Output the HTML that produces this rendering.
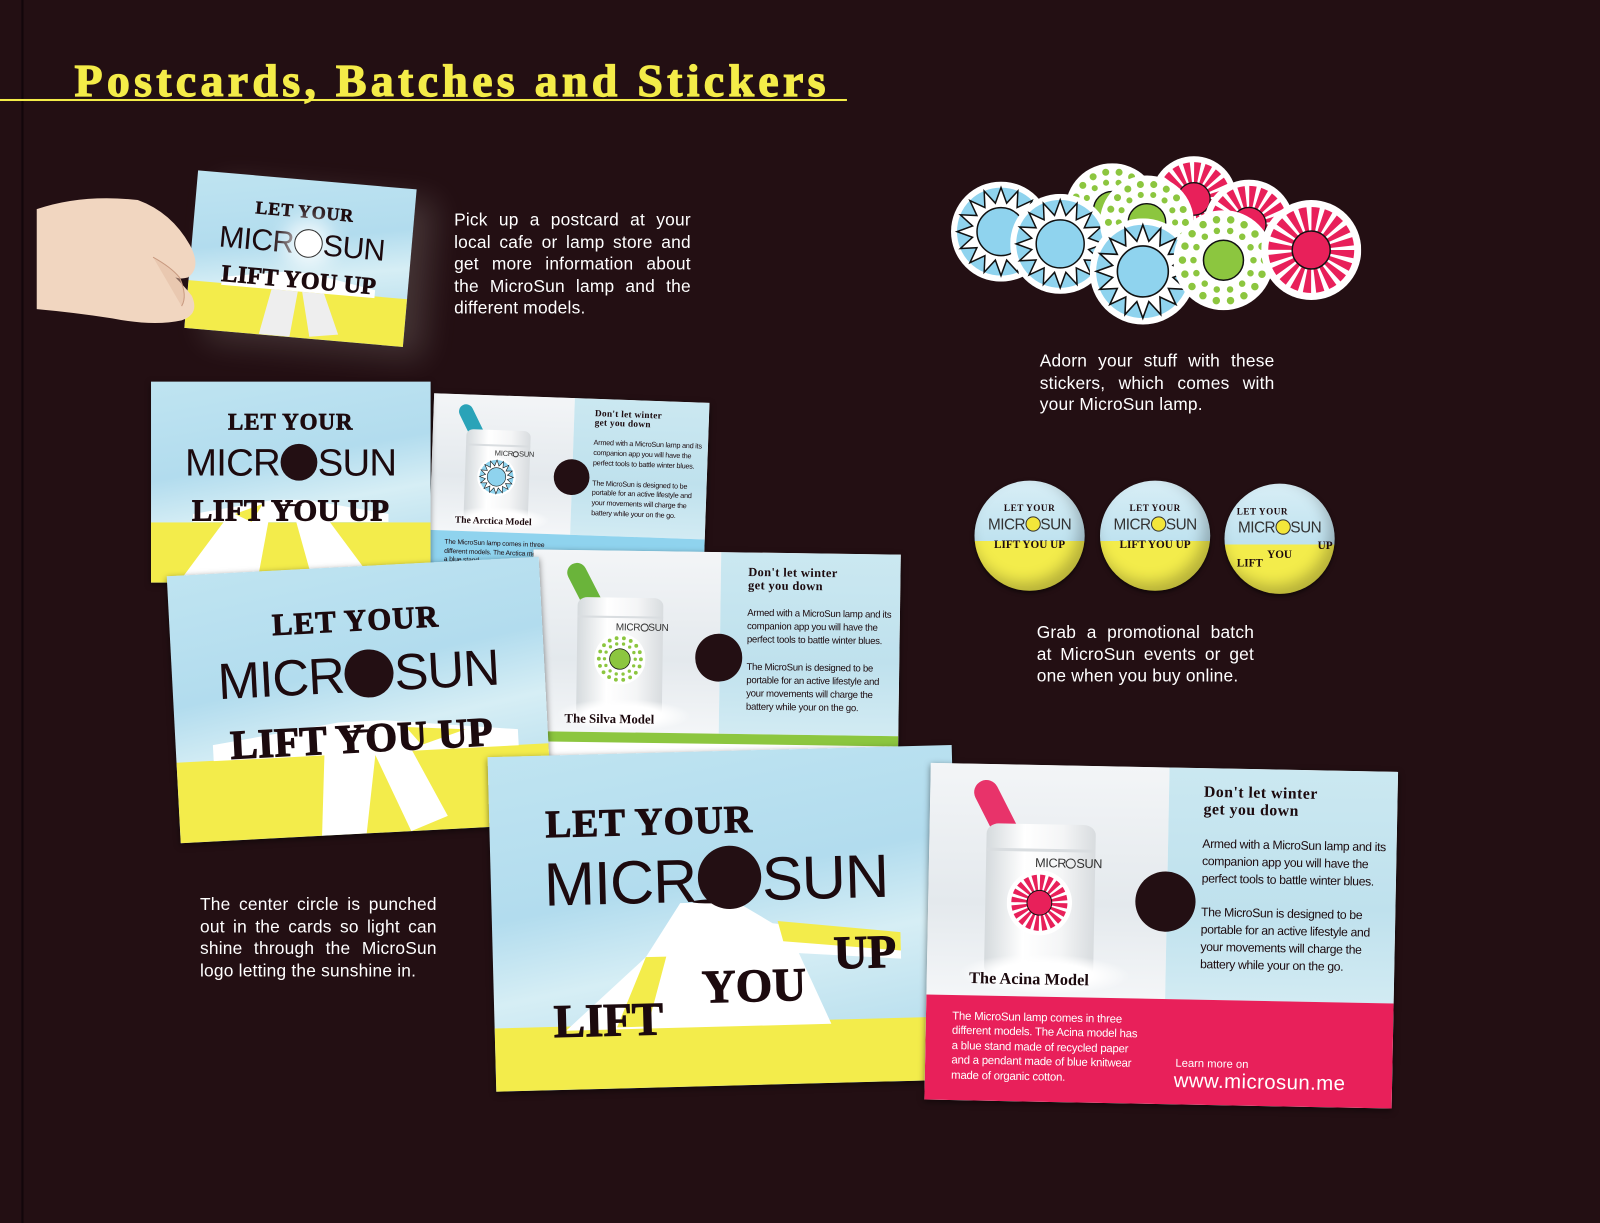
<!DOCTYPE html>
<html><head><meta charset="utf-8">
<style>
*{margin:0;padding:0;box-sizing:border-box}
body{width:1600px;height:1199px;background:#230f13;position:relative;overflow:hidden;font-family:"Liberation Sans",sans-serif}
#w{position:absolute;left:0;top:0;width:1568px;height:1175px;transform:scale(1.0204);transform-origin:0 0}
.abs{position:absolute}
.vline{position:absolute;left:21px;top:0;width:2px;height:1199px;background:#12060a}
.title{position:absolute;left:73px;top:57px;font-family:"Liberation Serif",serif;font-weight:bold;font-size:45px;color:#f4ec48;letter-spacing:4.2px;white-space:nowrap;line-height:45px;-webkit-text-stroke:1.2px #f4ec48}
.uline{position:absolute;left:0;top:97px;width:830px;height:2px;background:#f4ec48}
.txt{position:absolute;color:#fff;font-size:17px;line-height:21.5px;text-align:justify;text-align-last:left;letter-spacing:.2px}
.front{position:absolute;width:36.5em;height:26.2em;overflow:hidden;background:linear-gradient(170deg,#bfe4f1 0%,#b2dcee 40%,#d6eef5 60%,#a9d7ea 100%);box-shadow:0 2px 6px rgba(0,0,0,.5)}
.front .yel{position:absolute;left:0;right:0;top:70%;bottom:0;background:#f3ec4b}
.front svg.beam{position:absolute;left:0;top:0;width:100%;height:100%}
.front .t1{position:absolute;left:0;right:0;top:15%;text-align:center;font-family:"Liberation Serif",serif;font-weight:900;font-size:3em;line-height:1;color:#1c0a0e;letter-spacing:.04em;-webkit-text-stroke:.03em #1c0a0e}
.front .t2{position:absolute;left:0;right:0;top:31%;text-align:center;font-size:5em;line-height:1;color:#1c0a0e;letter-spacing:-.02em;white-space:nowrap}
.front .o{display:inline-block;width:.95em;height:.95em;border-radius:50%;background:#230f13;vertical-align:-.12em;margin:0 .02em}
.front .t3{position:absolute;left:0;right:0;top:57%;text-align:center;font-family:"Liberation Serif",serif;font-weight:900;font-size:4em;line-height:1;color:#1c0a0e;white-space:nowrap;letter-spacing:.01em;-webkit-text-stroke:.03em #1c0a0e}
.front .disc{position:absolute;left:46%;width:8%;top:61%;height:1.2%;background:#1c0a0e;border-radius:50%}
.back{position:absolute;width:45.8em;height:33em;overflow:hidden;background:#fff;box-shadow:0 2px 6px rgba(0,0,0,.5)}
.back .photo{position:absolute;left:0;top:0;width:23.4em;height:22.7em;background:linear-gradient(180deg,#f3f5f7,#e4e9ed 60%,#f4f6f8)}
.back .panel{position:absolute;left:23.4em;top:0;width:22.4em;height:22.7em;background:linear-gradient(180deg,#cbe8f1,#bfe1ed 60%,#d2ebf3)}
.back .band{position:absolute;left:0;top:22.7em;width:100%;height:10.3em}
.back .hole{position:absolute;left:20.3em;top:10.2em;width:5.9em;height:5.9em;border-radius:50%;background:#230f13}
.back .strap{position:absolute;left:8.2em;top:0.6em;width:2.4em;height:9.5em;border-radius:1.2em;transform:rotate(-28deg);transform-origin:50% 100%}
.back .cyl{position:absolute;left:5.6em;top:5.8em;width:10.7em;height:15em;border-radius:1.2em/1em;background:linear-gradient(90deg,#d5dadd,#fff 35%,#f4f5f6 70%,#d8dcdf)}
.back .cap{position:absolute;left:5.6em;top:8.2em;width:10.7em;height:.25em;background:#d9dde0}
.back .lt{position:absolute;left:5.6em;width:10.7em;top:7.1em;text-align:center;font-size:1.25em;color:#333;letter-spacing:-.03em}
.back .lt b{display:inline-block;width:.8em;height:.8em;border:1px solid #333;border-radius:50%;vertical-align:-.1em}
.back svg.sun{position:absolute;left:7.7em;top:10.3em;width:6.4em;height:6.4em}
.back .snow{position:absolute;left:3em;top:18.5em;width:17em;height:4em;border-radius:50%;background:radial-gradient(#fff 40%,rgba(255,255,255,0) 70%)}
.back .model{position:absolute;left:2.6em;top:12.6em;font-family:"Liberation Serif",serif;font-weight:900;font-size:1.6em;color:#1c0a0e;white-space:nowrap}
.back .h{position:absolute;left:17.3em;top:1.05em;font-family:"Liberation Serif",serif;font-weight:900;font-size:1.55em;line-height:1.05;color:#1c0a0e;letter-spacing:.03em}
.back .b{position:absolute;left:22.3em;top:5.5em;width:15.5em;font-size:1.2em;line-height:1.4;color:#1c0a0e;letter-spacing:-.03em}
.back .bt{position:absolute;left:2.3em;top:21.5em;width:17em;font-size:1.12em;line-height:1.3;color:#fff;letter-spacing:-.02em}
.back .lm{position:absolute;left:22.3em;top:25.8em;font-size:1.1em;color:#fff}
.back .www{position:absolute;left:12.2em;top:14.8em;font-size:2em;color:#fff;letter-spacing:.02em}
.badge{position:absolute;width:108px;height:108px;border-radius:50%;overflow:hidden;background:linear-gradient(180deg,#d8eef6,#bfe2ef 55%,#f3ec4b 55%);box-shadow:inset -6px -8px 14px rgba(0,0,0,.25),0 2px 4px rgba(0,0,0,.6)}
.badge div{position:absolute;left:0;right:0;text-align:center;color:#1c0a0e;white-space:nowrap}
.badge .a{top:22px;font-family:"Liberation Serif",serif;font-weight:900;font-size:9px;letter-spacing:.5px}
.badge .m{top:35px;font-size:15px;color:#333;letter-spacing:-.5px}
.badge .m i{display:inline-block;width:15px;height:15px;border-radius:50%;background:#f3e63a;border:1px solid #333;vertical-align:-2px}
.badge .c{top:57px;font-family:"Liberation Serif",serif;font-weight:900;font-size:11px}
</style></head><body>
<div id="w">
<div class="vline"></div>
<div class="title">Postcards, Batches and Stickers</div>
<div class="uline"></div>

<svg width="0" height="0" style="position:absolute">
<defs>
<symbol id="sb" viewBox="-100 -100 200 200">
<circle r="100" fill="#fff"/><circle r="88" fill="#8fd3ee"/>
<polygon fill="#fff" stroke="#111" stroke-width="3" points="88,0 56.9,11.3 81.3,33.7 48.2,32.2 62.2,62.2 32.2,48.2 33.7,81.3 11.3,56.9 0,88 -11.3,56.9 -33.7,81.3 -32.2,48.2 -62.2,62.2 -48.2,32.2 -81.3,33.7 -56.9,11.3 -88,0 -56.9,-11.3 -81.3,-33.7 -48.2,-32.2 -62.2,-62.2 -32.2,-48.2 -33.7,-81.3 -11.3,-56.9 0,-88 11.3,-56.9 33.7,-81.3 32.2,-48.2 62.2,-62.2 48.2,-32.2 81.3,-33.7 56.9,-11.3"/>
<circle r="48" fill="#8fd3ee" stroke="#111" stroke-width="3"/>
</symbol>
<symbol id="sg" viewBox="-100 -100 200 200">
<circle r="100" fill="#fff"/>
<circle r="82" fill="none" stroke="#8cc63f" stroke-width="15" stroke-linecap="round" stroke-dasharray="0 28.6"/>
<circle r="60" fill="none" stroke="#8cc63f" stroke-width="13" stroke-linecap="round" stroke-dasharray="0 26.9"/>
<circle r="40" fill="#8cc63f" stroke="#111" stroke-width="3"/>
</symbol>
<symbol id="sp" viewBox="-100 -100 200 200">
<circle r="100" fill="#fff"/>
<circle r="62" fill="none" stroke="#e8205a" stroke-width="48" stroke-dasharray="12 7.48"/>
<circle r="38" fill="#e8205a" stroke="#111" stroke-width="3"/>
</symbol>
</defs>
</svg>

<div class="front" style="left:187px;top:176px;font-size:5.9px;transform:rotate(5deg);box-shadow:20px 10px 30px rgba(255,255,240,.15)">
 <div class="yel"></div>
 <svg class="beam" viewBox="0 0 100 100" preserveAspectRatio="none"><polygon fill="#fff" points="15,66 44,59 56,59 85,66 85,71 15,71"/><polygon fill="#eee" points="38,71 50,71 48,100 34,100"/><polygon fill="#eee" points="52,71 62,71 70,96 57,99"/></svg>
 <div class="t1">LET YOUR</div>
 <div class="t2">MICR<span class="o" style="background:#fff;border:1px solid #333;box-shadow:0 0 20px 10px rgba(255,255,255,.8)"></span>SUN</div>
 <div class="t3">LIFT YOU UP</div>
</div>
<svg class="abs" style="left:30px;top:185px" width="180" height="140" viewBox="30 185 180 140">
<path fill="#f1d6c0" d="M36 205 Q80 190 135 196 Q168 208 186 240 Q198 262 184 272 Q170 276 160 262 L150 252 Q176 274 188 290 Q196 308 178 314 Q150 320 110 312 Q70 306 36 303 Z"/>
<path fill="#e2b9a0" d="M150 252 Q168 262 176 272 Q184 290 178 300" stroke="#c89a80" stroke-width="1" fill-opacity=".5"/>
</svg>

<div class="txt" style="left:445px;top:205px;width:232px">Pick up a postcard at your local cafe or lamp store and get more information about the MicroSun lamp and the different models.</div>

<svg class="abs" style="left:925px;top:150px" width="420" height="180" viewBox="925 150 420 180">
<use href="#sp" x="1128" y="153" width="84" height="84"/>
<use href="#sg" x="1044" y="160" width="92" height="92"/>
<use href="#sb" x="932" y="178" width="98" height="98"/>
<use href="#sp" x="1180" y="176" width="88" height="88"/>
<use href="#sb" x="990" y="190" width="98" height="98"/>
<use href="#sg" x="1078" y="172" width="92" height="92"/>
<use href="#sb" x="1068" y="214" width="104" height="104"/>
<use href="#sg" x="1150" y="206" width="98" height="98"/>
<use href="#sp" x="1236" y="196" width="98" height="98"/>
</svg>
<div class="txt" style="left:1019px;top:343px;width:230px">Adorn your stuff with these stickers, which comes with your MicroSun lamp.</div>

<div class="badge" style="left:955px;top:471px"><div class="a">LET YOUR</div><div class="m">MICR<i></i>SUN</div><div class="c">LIFT YOU UP</div></div>
<div class="badge" style="left:1078px;top:471px"><div class="a">LET YOUR</div><div class="m">MICR<i></i>SUN</div><div class="c">LIFT YOU UP</div></div>
<div class="badge" style="left:1200px;top:474px"><div class="a" style="text-align:left;left:12px">LET YOUR</div><div class="m">MICR<i></i>SUN</div><div class="c" style="top:55px;text-align:right;right:2px">UP</div><div class="c" style="top:64px">YOU</div><div class="c" style="top:72px;text-align:left;left:12px">LIFT</div></div>
<div class="txt" style="left:1016px;top:609px;width:213px">Grab a promotional batch at MicroSun events or get one when you buy online.</div>

<div class="txt" style="left:196px;top:876px;width:232px">The center circle is punched out in the cards so light can shine through the MicroSun logo letting the sunshine in.</div>

<div class="back" style="left:422px;top:390px;font-size:5.9px;transform:rotate(2deg)">
 <div class="photo"></div><div class="panel"></div><div class="band" style="background:#8fd3ee"></div>
 <div class="strap" style="background:#2aa3b8"></div><div class="cyl"></div><div class="cap"></div>
 <div class="lt">MICR<b></b>SUN</div>
 <svg class="sun" viewBox="-100 -100 200 200"><use href="#sb" x="-100" y="-100" width="200" height="200"/></svg>
 <div class="snow"></div>
 <div class="model">The Arctica Model</div>
 <div class="hole"></div>
 <div class="h">Don't let winter<br>get you down</div>
 <div class="b">Armed with a MicroSun lamp and its companion app you will have the perfect tools to battle winter blues.<br><br>The MicroSun is designed to be portable for an active lifestyle and your movements will charge the battery while your on the go.</div>
 <div class="bt" style="color:#1c0a0e">The MicroSun lamp comes in three different models. The Arctica model has a blue stand</div>
</div>
<div class="front" style="left:148px;top:374px;font-size:7.5px">
 <div class="yel"></div>
 <svg class="beam" viewBox="0 0 100 100" preserveAspectRatio="none"><polygon fill="#fff" points="15,66 44,59 56,59 85,66 85,70 15,70"/><polygon fill="#fff" points="26,70 42,70 38,100 10,100"/><polygon fill="#fff" points="52,70 64,70 80,100 58,100"/><polygon fill="#f3ec4b" points="30,66 40,61 36,70"/></svg>
 <div class="disc"></div>
 <div class="t1">LET YOUR</div>
 <div class="t2">MICR<span class="o"></span>SUN</div>
 <div class="t3">LIFT YOU UP</div>
</div>

<div class="back" style="left:521px;top:541px;font-size:7.86px;transform:rotate(.8deg)">
 <div class="photo"></div><div class="panel"></div><div class="band" style="background:#fff;border-top:1.3em solid #8cc63f"></div>
 <div class="strap" style="background:#6ab43a"></div><div class="cyl"></div><div class="cap"></div>
 <div class="lt">MICR<b></b>SUN</div>
 <svg class="sun" viewBox="-100 -100 200 200"><use href="#sg" x="-100" y="-100" width="200" height="200"/></svg>
 <div class="snow"></div>
 <div class="model">The Silva Model</div>
 <div class="hole"></div>
 <div class="h">Don't let winter<br>get you down</div>
 <div class="b">Armed with a MicroSun lamp and its companion app you will have the perfect tools to battle winter blues.<br><br>The MicroSun is designed to be portable for an active lifestyle and your movements will charge the battery while your on the go.</div>
 <div class="bt" style="color:#1c0a0e;top:22.8em">The MicroSun lamp comes in three different models.</div>
</div>
<div class="front" style="left:170px;top:555px;font-size:10px;transform:rotate(-3deg)">
 <div class="yel"></div>
 <svg class="beam" viewBox="0 0 100 100" preserveAspectRatio="none"><polygon fill="#fff" points="10,64 44,58 56,58 92,64 92,70 10,70"/><polygon fill="#fff" points="40,66 54,66 50,100 38,100"/><polygon fill="#fff" points="52,66 62,66 72,95 62,100"/><polygon fill="#f3ec4b" points="62,61 78,63 66,68"/></svg>
 <div class="disc"></div>
 <div class="t1">LET YOUR</div>
 <div class="t2">MICR<span class="o"></span>SUN</div>
 <div class="t3">LIFT YOU UP</div>
</div>

<div class="front" style="left:482px;top:736px;width:455px;height:328px;font-size:10px;transform:rotate(-1.5deg)">
 <div class="yel" style="top:81%"></div>
 <svg class="beam" viewBox="0 0 455 328" preserveAspectRatio="none"><polygon fill="#fff" points="185,148 240,148 275,170 400,188 400,208 300,200 330,270 70,270 150,200"/><polygon fill="#f3ec4b" points="280,168 400,182 400,200 285,188"/><polygon fill="#f3ec4b" points="150,200 170,200 150,268 120,268"/></svg>
 <div style="position:absolute;left:197px;top:145px;width:40px;height:4px;border-radius:50%;background:#1c0a0e"></div>
 <div style="position:absolute;left:55px;top:46px;font-family:'Liberation Serif',serif;font-weight:900;font-size:38px;color:#1c0a0e;letter-spacing:1px;white-space:nowrap;-webkit-text-stroke:1px #1c0a0e">LET YOUR</div>
 <div style="position:absolute;left:52px;top:93px;font-size:60px;line-height:1;color:#1c0a0e;white-space:nowrap;letter-spacing:-1px">MICR<span class="o" style="width:62px;height:62px;vertical-align:-8px"></span>SUN</div>
 <div style="position:absolute;left:58px;top:238px;font-family:'Liberation Serif',serif;font-weight:900;font-size:46px;line-height:1;color:#1c0a0e;-webkit-text-stroke:1px #1c0a0e">LIFT</div>
 <div style="position:absolute;left:204px;top:208px;font-family:'Liberation Serif',serif;font-weight:900;font-size:46px;line-height:1;color:#1c0a0e;-webkit-text-stroke:1px #1c0a0e">YOU</div>
 <div style="position:absolute;left:334px;top:178px;font-family:'Liberation Serif',serif;font-weight:900;font-size:46px;line-height:1;color:#1c0a0e;-webkit-text-stroke:1px #1c0a0e">UP</div>
</div>

<div class="back" style="left:909px;top:752px;font-size:10px;transform:rotate(1.1deg)">
 <div class="photo"></div><div class="panel"></div><div class="band" style="background:#e8205a"></div>
 <div class="strap" style="background:#e8336a"></div><div class="cyl"></div><div class="cap"></div>
 <div class="lt">MICR<b></b>SUN</div>
 <svg class="sun" viewBox="-100 -100 200 200"><use href="#sp" x="-100" y="-100" width="200" height="200"/></svg>
 <div class="snow"></div>
 <div class="model">The Acina Model</div>
 <div class="hole"></div>
 <div class="h">Don't let winter<br>get you down</div>
 <div class="b">Armed with a MicroSun lamp and its companion app you will have the perfect tools to battle winter blues.<br><br>The MicroSun is designed to be portable for an active lifestyle and your movements will charge the battery while your on the go.</div>
 <div class="bt">The MicroSun lamp comes in three different models. The Acina model has a blue stand made of recycled paper and a pendant made of blue knitwear made of organic cotton.</div>
 <div class="lm">Learn more on</div>
 <div class="www">www.microsun.me</div>
</div>
</div>
</body></html>
